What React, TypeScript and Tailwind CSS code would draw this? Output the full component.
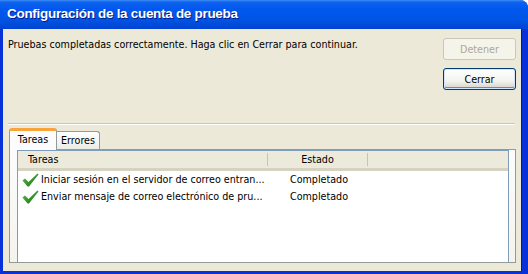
import React from "react";

function Check() {
  return (
    <svg width="17" height="14" viewBox="0 0 17 14" className="shrink-0">
      <defs>
        <linearGradient id="cg" x1="0" y1="0" x2="1" y2="1">
          <stop offset="0" stopColor="#5cc04a" />
          <stop offset="1" stopColor="#17700f" />
        </linearGradient>
      </defs>
      <polygon points="0.5,7.5 3,5.5 6.5,9 15.5,0.5 16.5,1.5 7,13.5 5.5,13.5" fill="url(#cg)" />
    </svg>
  );
}

export default function App() {
  const body = "font-['DejaVu_Sans_Condensed','DejaVu_Sans',sans-serif] text-[10.65px] leading-[13px] text-black";
  return (
    <div className="w-[528px] h-[274px] bg-white overflow-hidden">
      <div className="w-[528px] h-[274px] flex flex-col bg-[#0831d9] rounded-tr-[8px] overflow-hidden">
        {/* Title bar */}
        <div className="h-[29px] shrink-0 flex items-center pl-[7px] bg-[linear-gradient(to_bottom,#3b8cf5_0%,#0f62ec_8%,#0058ee_30%,#0055e6_65%,#004ad8_88%,#0043cf_100%)]">
          <span className="font-['Liberation_Sans',sans-serif] font-bold text-[13.5px] text-white [text-shadow:1px_1px_0_#0a1a80] tracking-[-0.3px]">
            Configuración de la cuenta de prueba
          </span>
        </div>
        {/* Window body */}
        <div className="flex-1 flex ml-[3px] mr-[6px] mb-[3px] border-r border-[#001b8f]">
          <div className={`flex-1 bg-[#ece9d8] flex flex-col pl-[5px] pr-[5px] pt-[9px] pb-[8px] ${body}`}>
            <div className="flex justify-between">
              <div className="pt-[0px]">Pruebas completadas correctamente. Haga clic en Cerrar para continuar.</div>
              <div className="flex flex-col gap-[8px] w-[73px]">
                <div className="h-[22px] rounded-[3px] border border-[#c9c7ba] bg-[#f5f4ea] flex items-center justify-center text-[#aca899]">
                  Detener
                </div>
                <div className="h-[22px] rounded-[3px] border border-[#003c74] bg-[linear-gradient(to_bottom,#ffffff,#f3f3ef_60%,#d6d0c5)] shadow-[inset_0_0_0_1px_#cee7ff,inset_0_-1px_0_1px_#6982ee] flex items-center justify-center">
                  Cerrar
                </div>
              </div>
            </div>
            <div className="mt-[33px] h-[2px] border-t border-[#c8c5b4] border-b border-b-white mr-[1px]" />
            {/* Tabs */}
            <div className="mt-[3px] flex items-end h-[21px] pl-[1px] relative z-10">
              <div className="w-[48px] h-[22px] -mb-[1px] bg-[#fcfcfe] border-x border-[#919b9c] rounded-t-[3px] border-t-[3px] border-t-[#f7a43a] flex items-center justify-center pb-[2px]">
                Tareas
              </div>
              <div className="w-[43px] h-[18px] bg-[linear-gradient(to_bottom,#ffffff,#ecebe6)] border-t border-r border-[#919b9c] rounded-tr-[3px] flex items-center justify-center">
                Errores
              </div>
            </div>
            <div className="flex-1 ml-[1px] border border-[#919b9c] bg-[linear-gradient(to_bottom,#fcfcfe,#f4f3ee)] pl-[7px] pr-[6px] flex">
              <div className="flex-1 border-x border-t border-[#7f9db9] bg-white flex flex-col">
                <div className="h-[20px] flex bg-[#ebeadb] border-b-[3px] border-b-[#d6d2c2] shrink-0">
                  <div className="w-[250px] pl-[10px] flex items-center border-r border-[#c7c5b2] my-[2px]">Tareas</div>
                  <div className="w-[100px] flex items-center justify-center border-r border-[#c7c5b2] my-[2px]">Estado</div>
                </div>
                <div className="flex h-[17px] items-center">
                  <div className="w-[251px] flex items-center pl-[4px] gap-[2px]">
                    <Check />
                    <span className="whitespace-nowrap">Iniciar sesión en el servidor de correo entran...</span>
                  </div>
                  <div className="w-[100px] text-center">Completado</div>
                </div>
                <div className="flex h-[17px] items-center">
                  <div className="w-[251px] flex items-center pl-[4px] gap-[2px]">
                    <Check />
                    <span className="whitespace-nowrap">Enviar mensaje de correo electrónico de pru...</span>
                  </div>
                  <div className="w-[100px] text-center">Completado</div>
                </div>
              </div>
            </div>
          </div>
        </div>
      </div>
    </div>
  );
}
